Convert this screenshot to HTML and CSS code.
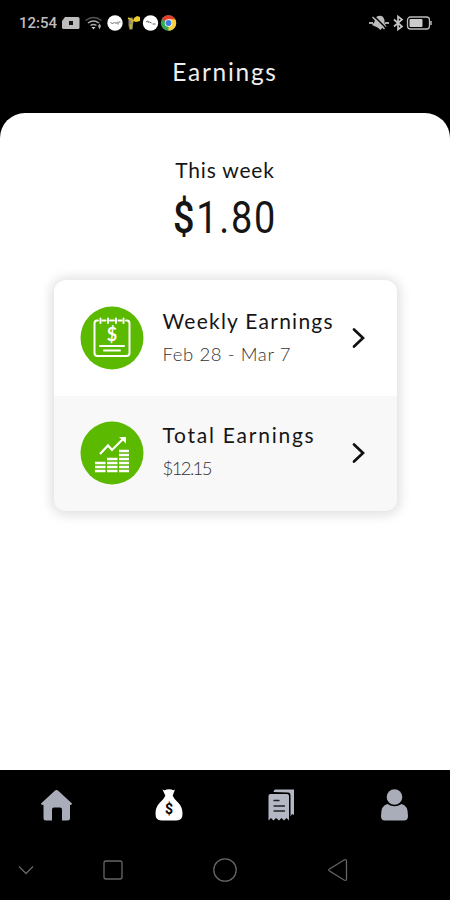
FILE: index.html
```html
<!DOCTYPE html>
<html lang="en">
<head>
  <meta charset="UTF-8">
  <meta name="viewport" content="width=device-width, initial-scale=1.0">
  <title>Earnings</title>
  <link rel="stylesheet" href="styles.css">
</head>
<body>
  <div class="status-bar">
    <span class="time">12:54</span>
    <svg class="status-left" width="118" height="20" viewBox="0 0 118 20">
      <!-- card -->
      <path d="M4 4h13q1.500 0 1.500 1.500v9q0 1.500-1.500 1.500H3Q1 16 1 14.500V8z" fill="#bdbdbd"/>
      <rect x="8" y="8" width="4" height="4" fill="#111"/>
      <!-- wifi -->
      <g fill="none" stroke="#aaa" stroke-width="1.500">
        <path d="M24.500 7.500q8-6 16 0" stroke="#555"/>
        <path d="M27 10q5.500-4 11 0M29.500 12.500q3-2.200 6 0"/>
      </g>
      <path d="M30.500 14h4l-2 2.500z" fill="#ccc"/>
      <path d="M37 13l1.500-2.500L40 13l-1.500 3.500z" fill="#aaa"/>
      <!-- notifications -->
      <circle cx="54" cy="10" r="7.700" fill="#fff"/>
      <path d="M49.500 9l2 2 2-2M54 10h2M57 8.500v3M58 9h1.500" fill="none" stroke="#666"/>
      <path d="M67.500 5l4-.5 1 4-1 8h-3l-1-4z" fill="#8d8b68"/>
      <path d="M67 5l4 2v3M70 11v5" stroke="#d8b827" stroke-width="1.500" fill="none"/>
      <path d="M73 5l3-2 3 1v4l-4 1-3-1z" fill="#efcf2e"/>
      <circle cx="89.500" cy="10" r="7.700" fill="#fff"/>
      <path d="M85 9l2-1 1 2M88.500 9l2 1M91.500 11h3" fill="none" stroke="#666"/>
      <!-- browser -->
      <circle cx="107.500" cy="10" r="7.700" fill="#37a852"/>
      <path d="M107.500 10L100.800 6.200A7.700 7.700 0 0 1 114.200 6.200z" fill="#e23e31"/>
      <path d="M107.500 10V6.200h6.700A7.700 7.700 0 0 1 107.500 17.700z" fill="#f9cc38"/>
      <circle cx="107.500" cy="10" r="3.800" fill="#fff"/>
      <circle cx="107.500" cy="10" r="3" fill="#3e7de0"/>
    </svg>
    <svg class="status-right" width="64" height="20" viewBox="0 0 64 20">
      <!-- muted bell -->
      <path d="M1 10h4M17 10h4" stroke="#aaa" stroke-width="2"/>
      <path d="M4 12l2.500-3Q7 4 10 3q5-1.500 6.500 4v3l2 4-4 .5-2 2.500-3-2.500z" fill="#bbb"/>
      <path d="M6 3l12 12" stroke="#000" stroke-width="1.500"/>
      <path d="M4.500 4l12 12" stroke="#bbb" stroke-width="1.500"/>
      <!-- bluetooth -->
      <path d="M26 6.500l8 7-4 3V3.500l4 3-8 7" fill="none" stroke="#c4c4c4" stroke-width="1.700"/>
      <!-- battery -->
      <rect x="39.500" y="4" width="22" height="12" rx="3" fill="none" stroke="#bbb" stroke-width="1.300"/>
      <rect x="41.500" y="6" width="13" height="8" rx="1" fill="#ccc"/>
      <path d="M63 8v4" stroke="#bbb" stroke-width="1.500"/>
    </svg>
  </div>

  <h1>Earnings</h1>

  <main>
    <h2>This week</h2>
    <p class="amount"><span class="dollar">$</span>1.80</p>

    <div class="card">
      <a class="row">
        <svg class="icon" width="64" height="64" viewBox="0 0 64 64">
          <circle cx="32" cy="32" r="31.500" fill="#5bb900"/>
          <g fill="none" stroke="#fff" stroke-width="2" stroke-linecap="round">
            <path d="M18 14.500h-1q-2.500 0-2.500 3v29.500q0 3 3 3h29q3 0 3-3V17.500q0-3-2.500-3h-1M22.500 14.500h3M30 14.500h4M38.500 14.500h3"/>
            <path d="M20.500 12.500v4.500M28 12.500v4.500M36 12.500v4.500M43.500 12.500v4.500"/>
            <path d="M20 40h24M24 44.500h16"/>
          </g>
          <text class="icon-dollar" x="32" y="35" text-anchor="middle">$</text>
        </svg>
        <div class="info">
          <div class="title weekly">Weekly Earnings</div>
          <div class="sub dates">Feb 28 - Mar 7</div>
        </div>
        <svg class="chevron" width="14" height="22" viewBox="0 0 14 22">
          <path d="M2 2.500l9 8.500-9 8.500"/>
        </svg>
      </a>
      <a class="row total">
        <svg class="icon" width="64" height="64" viewBox="0 0 64 64">
          <circle cx="32" cy="32" r="31.500" fill="#5bb900"/>
          <path d="M20 33l8-8.500 4 4.500 11-11" fill="none" stroke="#fff" stroke-width="2.200"/>
          <path d="M39 16h7v6.500z" fill="#fff"/>
          <g stroke="#fff" stroke-width="2.500">
            <path d="M15 42h10.500M15 46h10.500M15 50h10.500"/>
            <path d="M27 38h10.500M27 42h10.500M27 46h10.500M27 50h10.500"/>
            <path d="M39 30h10M39 34h10M39 38h10M39 42h10M39 46h10M39 50h10"/>
          </g>
        </svg>
        <div class="info">
          <div class="title">Total Earnings</div>
          <div class="sub money">$12.15</div>
        </div>
        <svg class="chevron" width="14" height="22" viewBox="0 0 14 22">
          <path d="M2 2.500l9 8.500-9 8.500"/>
        </svg>
      </a>
    </div>
  </main>

  <nav class="tabs">
    <svg width="32" height="34" viewBox="0 0 32 34">
      <path d="M16.500 1q1 0 2 1L32 14.500q0 1.500-2 1.500v13q0 2.500-2.500 2.500h-5.500V20.500q0-2-2-2h-6q-2 0-2 2v11H6Q3.500 31.500 3.500 29V16q-2.500 0-2.500-1.500L14.500 2q1-1 2-1z" fill="#a9acb9"/>
    </svg>
    <svg width="32" height="34" viewBox="0 0 32 34">
      <path d="M9.500.5q2 1.500 4 0 2.500-.5 5 0 2 1.500 3.500 0L19.500 7h-7z" fill="#fff"/>
      <path d="M12.500 6.500h7q1.500 3.500 6 7.500 4 4 4 11 0 6.500-6 6.500h-15q-6 0-6-6.500 0-7 4-11 4.500-4 6-7.500z" fill="#fff"/>
      <text class="bag-dollar" x="16" y="25" text-anchor="middle">$</text>
    </svg>
    <svg width="32" height="34" viewBox="0 0 32 34">
      <path d="M8.500 3q0-2.500 2-2.500h18.500V26l-2-1-1.500 2.500V6q0-2.500-2-2.500z" fill="#b4b7c4"/>
      <path d="M3.500 7q0-2 2-2h16.500q2 0 2 2v24.500L21.500 29l-2.500 2.500L16.500 29l-2.500 2.500L11 29l-2.500 2.500L6 29l-2.500 2.500z" fill="#b4b7c4"/>
      <path d="M9 11.500h5M9 17h10.500M9 22h10.500" stroke="#222" stroke-width="1.300" stroke-linecap="round"/>
    </svg>
    <svg width="32" height="34" viewBox="0 0 32 34">
      <circle cx="16.500" cy="8" r="7.800" fill="#a9acb9"/>
      <path d="M9.500 15q7 4.500 14 0 6.500 1 6.500 12 0 4.500-4 4.500h-19q-4 0-4-4.500Q3 16 9.500 15z" fill="#a9acb9"/>
    </svg>
  </nav>

  <div class="system-bar">
    <svg class="hide-bar" width="16" height="24" viewBox="0 0 16 24"><path d="M1 8.500l7 7 7-7"/></svg>
    <svg width="24" height="24" viewBox="0 0 24 24"><rect x="3" y="3" width="18" height="18" rx="2"/></svg>
    <svg width="24" height="24" viewBox="0 0 24 24"><circle cx="12" cy="12" r="11.200"/></svg>
    <svg width="24" height="24" viewBox="0 0 24 24"><path d="M4.500 11L19 2q2.500-1 2.500 1v18q0 2-2.500 1L4.500 13q-1.500-1 0-2z"/></svg>
  </div>
</body>
</html>
```
FILE: styles.css
```css
* {
  box-sizing: border-box;
}

body {
  margin: 0;
  height: 900px;
  display: flex;
  flex-direction: column;
  background-color: #000;
  color: #151515;
  font-family: Lato, sans-serif;
  overflow: hidden;
}

svg {
  flex: none;
  display: block;
}

/* Phone status bar */
.status-bar {
  display: flex;
  align-items: center;
  height: 46px;
  padding: 0 18px 0 19px;
}

.time {
  width: 42px;
  color: #bdbdbd;
  font: 500 15px/46px Roboto, sans-serif;
}

.status-right {
  margin-left: auto;
}

h1 {
  margin: 0;
  height: 67px;
  color: #eee;
  font-size: 24.5px;
  font-weight: 400;
  line-height: 52px;
  letter-spacing: 1.7px;
  text-align: center;
}

main {
  flex: 1;
  padding-top: 42px;
  background-color: #fff;
  border-radius: 25px 25px 0 0;
  text-align: center;
}

h2 {
  margin: 0;
  font-size: 21px;
  font-weight: 400;
  line-height: 30px;
  letter-spacing: 0.8px;
}

.amount {
  margin: 8px 0 36px;
  font-family: Roboto, sans-serif;
  font-size: 44px;
  line-height: 51px;
  letter-spacing: 2px;
  transform: scaleX(0.86);
}

.dollar {
  font-weight: 500;
}

/* Earnings list */
.card {
  width: 343px;
  height: 231px;
  margin: 0 auto;
  border-radius: 12px;
  background-color: #fff;
  box-shadow: 0 1px 12px 3px rgba(0, 0, 0, 0.13);
  overflow: hidden;
  text-align: left;
}

.row {
  display: flex;
  align-items: center;
  height: 116px;
  padding: 0 31px 0 26px;
}

.total {
  height: 115px;
  padding-bottom: 2px;
  background-color: #f8f8f8;
}

.info {
  flex: 1;
  margin-left: 19px;
  padding-bottom: 2px;
  white-space: nowrap;
}

.title {
  font-size: 21px;
  line-height: 33px;
  letter-spacing: 1.75px;
}

.weekly {
  letter-spacing: 1.25px;
}

.sub {
  color: #333;
  font-size: 18.5px;
  font-weight: 300;
  line-height: 34px;
}

.dates {
  letter-spacing: 0.6px;
}

.money {
  letter-spacing: -1.6px;
}

.icon-dollar {
  fill: #fff;
  font: 700 18px Lato, sans-serif;
}

.chevron path {
  fill: none;
  stroke: #111;
  stroke-width: 2.7;
  stroke-linecap: round;
}

/* Bottom navigation */
.tabs {
  display: flex;
  justify-content: space-around;
  height: 70px;
  padding-top: 19px;
}

.tabs svg {
  margin: 0 40px;
}

.bag-dollar {
  font: 700 14px Roboto, sans-serif;
}

.system-bar {
  display: flex;
  align-items: center;
  gap: 88px;
  height: 60px;
  padding-left: 18px;
}

.system-bar svg {
  fill: none;
  stroke: #666;
  stroke-width: 1.3;
}

.system-bar .hide-bar {
  margin-right: -21px;
}
```
